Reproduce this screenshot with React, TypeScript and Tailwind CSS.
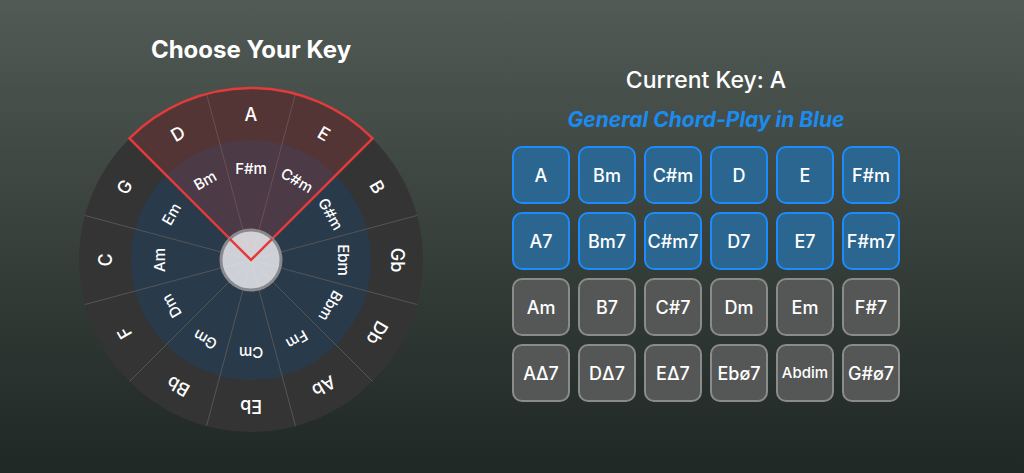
const majors = ["A", "E", "B", "Gb", "Db", "Ab", "Eb", "Bb", "F", "C", "G", "D"];
const minors = ["F#m", "C#m", "G#m", "Ebm", "Bbm", "Fm", "Cm", "Gm", "Dm", "Am", "Em", "Bm"];

const rows = [
  { blue: true, items: ["A", "Bm", "C#m", "D", "E", "F#m"] },
  { blue: true, items: ["A7", "Bm7", "C#m7", "D7", "E7", "F#m7"] },
  { blue: false, items: ["Am", "B7", "C#7", "Dm", "Em", "F#7"] },
  { blue: false, items: ["AΔ7", "DΔ7", "EΔ7", "Ebø7", "Abdim", "G#ø7"] },
];

const C = 175;
const pt = (r: number, deg: number) => {
  const a = ((deg - 90) * Math.PI) / 180;
  return [C + r * Math.cos(a), C + r * Math.sin(a)];
};

function sector(r: number, a0: number, a1: number) {
  const [x0, y0] = pt(r, a0);
  const [x1, y1] = pt(r, a1);
  const large = a1 - a0 > 180 ? 1 : 0;
  return `M${C},${C} L${x0},${y0} A${r},${r} 0 ${large} 1 ${x1},${y1} Z`;
}

function Wheel() {
  return (
    <svg width="350" height="350" viewBox="0 0 350 350" style={{ fontFamily: "Inter, 'Liberation Sans', sans-serif" }}>
      <circle cx={C} cy={C} r={172} fill="#343434" />
      <circle cx={C} cy={C} r={120} fill="#293a4b" />
      {majors.map((_, i) => {
        const [x, y] = pt(172, i * 30 + 15);
        return <line key={i} x1={C} y1={C} x2={x} y2={y} stroke="#555" strokeWidth="1" />;
      })}
      <path d={sector(172, -45, 45)} fill="rgba(200,60,60,0.22)" stroke="#e23b3b" strokeWidth="2.5" strokeLinejoin="round" />
      <circle cx={C} cy={C} r={30} fill="rgba(235,235,240,0.85)" stroke="#8a8a8e" strokeWidth="3" />
      <path d={`M${pt(30, -45).join(",")} L${C},${C} L${pt(30, 45).join(",")}`} fill="none" stroke="#e23b3b" strokeWidth="2.5" />
      {majors.map((m, i) => {
        const [x, y] = pt(146, i * 30);
        return (
          <text key={m} x={x} y={y} fill="#fff" fontSize="18" fontWeight="500" textAnchor="middle" dominantBaseline="central" transform={`rotate(${i * 30} ${x} ${y})`}>
            {m}
          </text>
        );
      })}
      {minors.map((m, i) => {
        const [x, y] = pt(92, i * 30);
        return (
          <text key={m} x={x} y={y} fill="#fff" fontSize="15" fontWeight="500" textAnchor="middle" dominantBaseline="central" transform={`rotate(${i * 30} ${x} ${y})`}>
            {m}
          </text>
        );
      })}
    </svg>
  );
}

export default function App() {
  return (
    <div
      className="w-[1024px] h-[473px] flex bg-gradient-to-b from-[#525a55] to-[#202825] text-white overflow-hidden"
      style={{ fontFamily: "Inter, 'Liberation Sans', sans-serif" }}
    >
      <div className="w-[502px] flex flex-col items-center pt-[34px]">
        <h1 className="text-[24px] font-bold leading-[32px]">Choose Your Key</h1>
        <div className="mt-[19px]">
          <Wheel />
        </div>
      </div>
      <div className="w-[408px] flex flex-col items-center pt-[64px]">
        <h2 className="text-[23px] font-medium leading-[32px]">Current Key: A</h2>
        <p className="mt-[10px] text-[21px] font-bold italic text-[#1a8cf0] leading-[28px]">General Chord-Play in Blue</p>
        <div className="mt-[12px] grid grid-cols-6 gap-[8px]">
          {rows.map((row) =>
            row.items.map((c) => (
              <div
                key={c}
                className={`w-[58px] h-[58px] rounded-[10px] border-2 flex items-center justify-center font-medium ${
                  row.blue ? "bg-[#2a6690] border-[#1a8cff]" : "bg-[#555756] border-[#8a8c8b]"
                } ${c === "Abdim" ? "text-[15px]" : "text-[18px]"}`}
              >
                {c}
              </div>
            ))
          )}
        </div>
      </div>
    </div>
  );
}
